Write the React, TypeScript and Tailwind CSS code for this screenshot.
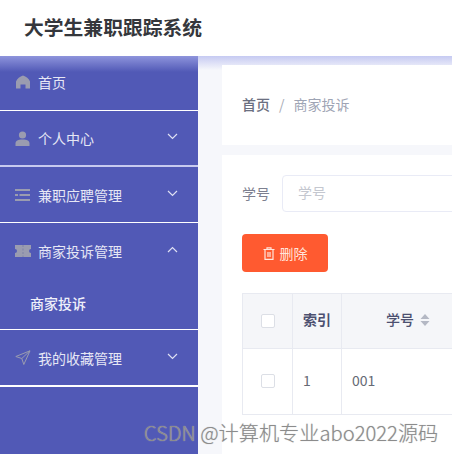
import React from "react";

const font = { fontFamily: '"Noto Sans CJK SC", "Noto Sans", sans-serif' };

function Chevron({ up }: { up?: boolean }) {
  return (
    <svg width="11" height="7" viewBox="0 0 11 7" fill="none" stroke="#dfe1f3" strokeWidth="1.2">
      <path d={up ? "M1 6l4.5-4.5L10 6" : "M1 1l4.5 4.5L10 1"} />
    </svg>
  );
}

const icons: Record<string, React.ReactNode> = {
  home: (
    <svg width="16" height="14" viewBox="0 0 16 14" fill="#9a9cb0">
      <path d="M8 0.500C11 1.500 14 3.500 15 6.500v7h-4.500V9.500h-5v4H1v-7C2 3.500 5 1.500 8 0.500z" />
    </svg>
  ),
  user: (
    <svg width="15" height="15" viewBox="0 0 15 15" fill="#9a9cb0">
      <circle cx="7.5" cy="4" r="3.600" />
      <path d="M0.500 15v-2.500C0.500 10 3 8.600 7.500 8.600S14.500 10 14.500 12.500V15z" />
    </svg>
  ),
  list: (
    <svg width="15" height="12" viewBox="0 0 15 12" fill="#9a9cb0">
      <rect x="0" y="0" width="15" height="2" />
      <rect x="0" y="5" width="3" height="2" />
      <rect x="4.500" y="5" width="10.500" height="2" />
      <rect x="0" y="10" width="15" height="2" />
    </svg>
  ),
  ticket: (
    <svg width="16" height="12" viewBox="0 0 16 12" fill="#9a9cb0">
      <path d="M0 0h16v4a2 2 0 0 0 0 4v4H0V8a2 2 0 0 0 0-4z" />
      <path d="M8 0v12" stroke="#7f82a6" strokeWidth="1" strokeDasharray="2 1.500" />
    </svg>
  ),
  send: (
    <svg width="16" height="15" viewBox="0 0 16 15" fill="none" stroke="#9a9cb0" strokeWidth="1">
      <path d="M15 0.800L0.800 6.500l6 2 2 6zM6.800 8.500L15 0.800" />
    </svg>
  ),
};

function MenuRow({ icon, label, arrow, h }: { icon: string; label: string; arrow?: "up" | "down"; h: string }) {
  return (
    <div className={`flex items-center pl-[14px] pr-[20px] ${h}`}>
      <span className="flex w-[17px] justify-center">{icons[icon]}</span>
      <span className="ml-[7px] flex-1 text-[14px] leading-5 text-[#e6e7f5]">{label}</span>
      {arrow && (
        <span className="-mt-[3px] flex">
          <Chevron up={arrow === "up"} />
        </span>
      )}
    </div>
  );
}

export default function App() {
  return (
    <div className="relative flex h-[454px] w-[452px] flex-col overflow-hidden bg-[#f5f6fa]" style={font}>
      <header className="flex h-[56px] shrink-0 items-center bg-white pl-[24px]">
        <h1 className="-mt-[3px] text-[19.8px] font-bold leading-6 text-[#35373c]">大学生兼职跟踪系统</h1>
      </header>

      <div className="flex min-h-0 flex-1">
        <aside className="flex w-[198px] shrink-0 flex-col bg-[#5159b6] bg-[linear-gradient(#8e94dc_0px,#5159b6_16px)]">
          <div className="border-b border-white">
            <MenuRow icon="home" label="首页" h="h-[54px] pb-[2px]" />
          </div>
          <div className="border-b-[2px] border-[#c7caef]">
            <MenuRow icon="user" label="个人中心" arrow="down" h="h-[54px]" />
          </div>
          <div className="border-b border-white">
            <MenuRow icon="list" label="兼职应聘管理" arrow="down" h="h-[55px]" />
          </div>
          <div className="border-b border-white">
            <MenuRow icon="ticket" label="商家投诉管理" arrow="up" h="h-[57px] pb-[2px]" />
            <div className="flex h-[49px] items-center pb-[3px] pl-[30px] text-[14px] font-medium leading-5 text-[#eff0fa]">
              商家投诉
            </div>
          </div>
          <div className="border-b-[2px] border-white">
            <MenuRow icon="send" label="我的收藏管理" arrow="down" h="h-[55px]" />
          </div>
        </aside>

        <main className="min-w-0 flex-1 bg-[linear-gradient(#c6caf2_0px,#f6f7fb_14px)] pl-[24px] pt-[9px]">
          <div className="flex h-[80px] w-[300px] items-center bg-white pb-[2px] pl-[20px] text-[14px] leading-5">
            <span className="font-medium text-[#6b6f80]">首页</span>
            <span className="mx-[9px] text-[#a8abb5]">/</span>
            <span className="text-[#9ea4b4]">商家投诉</span>
          </div>

          <div className="mt-[10px] h-[400px] w-[300px] bg-white pl-[20px] pt-[20px]">
            <div className="flex items-center">
              <span className="w-[40px] shrink-0 pb-[2px] text-[14px] leading-5 text-[#7d8090]">学号</span>
              <div className="flex h-[37px] w-[260px] shrink-0 items-center rounded-l-[4px] border border-[#e9ebf6] bg-white pb-[2px] pl-[15px] text-[14px] text-[#c4c7cf]">
                学号
              </div>
            </div>

            <div className="mt-[22px] flex h-[38px] w-[86px] items-center justify-center gap-[5px] rounded-[4px] bg-[#ff5a30] text-[14px] text-[#ffe5dc]">
              <svg width="12" height="13" viewBox="0 0 12 13" fill="none" stroke="#ffe5dc" strokeWidth="1.200">
                <path d="M0.500 2.500h11M4 2.500V0.800h4v1.700M2 2.500v9.800h8V2.500M5 5v5M7 5v5" />
              </svg>
              删除
            </div>

            <div className="mt-[21px] w-[280px] border-l border-t border-[#e8eaf1]">
              <div className="flex h-[54px] bg-[#f5f6f9]">
                <div className="flex w-[50px] items-center justify-center border-r border-[#e8eaf1]">
                  <span className="h-[14px] w-[14px] rounded-[2px] border border-[#dcdfe6] bg-white" />
                </div>
                <div className="flex w-[49px] items-center border-r border-[#e8eaf1] pb-[3px] pl-[10px] text-[14px] font-bold text-[#4c5070]">
                  索引
                </div>
                <div className="flex flex-1 items-center pb-[3px] pl-[44px] text-[14px] font-medium text-[#4c5070]">
                  学号
                  <svg className="ml-[6px]" width="10" height="12" viewBox="0 0 10 12" fill="#b4b8c4">
                    <path d="M5 0l4.500 5H0.500zM5 12L0.500 7h9z" />
                  </svg>
                </div>
              </div>
              <div className="flex h-[67px] border-t border-b border-[#e8eaf1] bg-white text-[14px] text-[#666a75]">
                <div className="flex w-[50px] items-center justify-center border-r border-[#e8eaf1] pb-[2px]">
                  <span className="h-[14px] w-[14px] rounded-[2px] border border-[#dcdfe6] bg-white" />
                </div>
                <div className="flex w-[49px] items-center border-r border-[#e8eaf1] pb-[2px] pl-[10px]">1</div>
                <div className="flex flex-1 items-center pb-[2px] pl-[10px]">001</div>
              </div>
            </div>
          </div>
        </main>
      </div>

      <span className="absolute left-[144px] top-[422px] whitespace-nowrap text-[20.2px] font-light leading-[22px] text-[#8c8c8c] [text-shadow:0_0_1px_#bbbbbb]">
        CSDN @计算机专业abo2022源码
      </span>
    </div>
  );
}
